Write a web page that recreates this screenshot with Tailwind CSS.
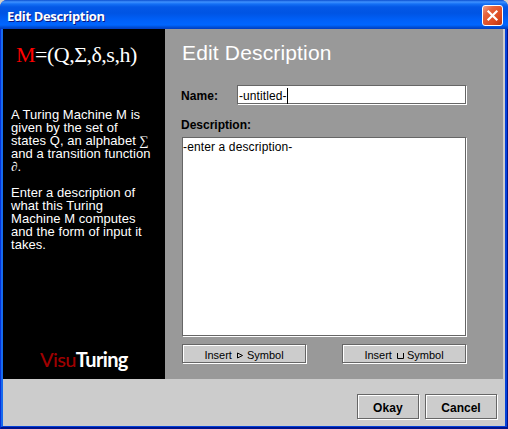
<!DOCTYPE html>
<html lang="en">
<head>
<meta charset="utf-8">
<title>Edit Description</title>
<script src="https://cdn.jsdelivr.net/npm/@tailwindcss/browser@4"></script>
</head>
<body class="bg-[#d4d0c8] font-['Liberation_Sans',Arial,sans-serif] text-black overflow-hidden">
<div class="w-[508px] h-[429px] flex flex-col rounded-t-[7px] overflow-hidden bg-[#0831d9] whitespace-nowrap">
  <header class="h-[29px] shrink-0 flex items-center justify-between pl-[7px] pr-[5px] pt-[3px] bg-[linear-gradient(180deg,#0b4fd0_0px,#3f92ff_2px,#1470f5_4px,#0458e6_7px,#0054e3_13px,#0060f8_20px,#0066ff_25px,#0050d8_27px,#003dc0_29px)]">
    <h1 class="font-['Open_Sans',sans-serif] font-bold text-[13px] leading-[16px] tracking-[-0.35px] text-white [text-shadow:1px_1px_0_#0a1883]">Edit Description</h1>
    <button class="w-[21px] h-[21px] rounded-[3px] border border-white bg-[linear-gradient(135deg,#f0a088_0%,#e5623c_30%,#dd4a20_70%,#b83410_100%)] flex items-center justify-center -mt-px" aria-label="Close">
      <svg class="w-[19px] h-[19px]" viewBox="0 0 19 19"><path d="M4.7 4.7 14.3 14.3M14.3 4.7 4.7 14.3" stroke="#fff" stroke-width="2.2" fill="none"/></svg>
    </button>
  </header>
  <div class="flex-1 flex border-x border-b-2 border-l-[#0831d9] border-r-[#00138c] border-b-[#00138c]">
  <div class="flex-1 flex flex-col border-l-2 border-r-2 border-b border-l-[#166aee] border-r-[#0441d8] border-b-[#0441d8] bg-[#ccc]">
    <div class="h-[350px] flex pr-[2px]">
      <aside class="w-[162px] bg-black text-white flex flex-col pl-2">
        <div class="h-[79px] pt-[14px] pl-[5px] font-['Liberation_Serif',serif] text-[22px] leading-[24px] tracking-[-0.5px]"><span class="text-[#f00]">M</span>=(Q,Σ,δ,s,h)</div>
        <p class="text-[13px] leading-[13px] tracking-[0.06px]">A Turing Machine M is<br>given by the set of<br>states Q, an alphabet <span class="font-['Liberation_Serif',serif]">∑</span><br>and a transition function<br><span class="font-['Liberation_Serif',serif]">∂</span>.</p>
        <p class="text-[13px] leading-[13px] tracking-[0.06px] mt-[13px]">Enter a description of<br>what this Turing<br>Machine M computes<br>and the form of input it<br>takes.</p>
        <div class="mt-auto mb-[8px] pl-[29px] font-['Lato',sans-serif] font-bold text-[20px] leading-[24px] tracking-[-0.65px]"><span class="text-[#a00000] font-medium">Visu</span>Turing</div>
      </aside>
      <main class="flex-1 bg-[#999] pl-[17px] flex flex-col">
        <h2 class="mt-[12px] text-[21px] leading-[24px] tracking-[0.16px] text-white">Edit Description</h2>
        <div class="mt-[20px] flex items-center h-[20px] text-[12px]">
          <label class="w-[55px] font-bold pt-[2px] -indent-px tracking-[0.05px]">Name:</label>
          <div class="w-[229px] h-[19px] -mt-px bg-white border border-[#666] shadow-[1px_1px_0_#fff] flex items-center pl-px pt-[2px]"><span class="tracking-[0.08px]">-untitled-</span><span class="w-px h-[16px] bg-black"></span></div>
        </div>
        <div class="mt-[12px] text-[12px] leading-[16px] font-bold -indent-px">Description:</div>
        <div class="mt-[4px] w-[284px] h-[199px] shrink-0 bg-white border border-[#666] shadow-[1px_1px_0_#fff] text-[12px] leading-[16px] tracking-[0.13px] pt-px">-enter a description-</div>
        <div class="mt-[8px] flex gap-[36px] text-[11px]">
          <button class="w-[124px] h-[19px] bg-[#ccc] border border-[#666] shadow-[1px_1px_0_#fff,inset_1px_1px_0_#fff] flex items-center justify-center pt-[3px]">Insert<svg class="ml-[5px] mr-[4px] w-[6px] h-[7px]" viewBox="0 0 6 7"><path d="M.5 1v5L5.5 3.5Z" fill="none" stroke="#000"/></svg>Symbol</button>
          <button class="w-[124px] h-[19px] bg-[#ccc] border border-[#666] shadow-[1px_1px_0_#fff,inset_1px_1px_0_#fff] flex items-center justify-center pt-[3px]">Insert<svg class="ml-[5px] mr-[3px] w-[7px] h-[9px]" viewBox="0 0 7 9"><path d="M.5 2v5.5h6V2" fill="none" stroke="#000"/></svg>Symbol</button>
        </div>
      </main>
    </div>
    <footer class="flex justify-end gap-[6px] pt-[15px] pr-[8px] text-[12px] font-bold">
      <button class="w-[62px] h-[25px] border border-[#666] shadow-[1px_1px_0_#fff,inset_1px_1px_0_#fff] pt-[2px] tracking-[0.1px]">Okay</button>
      <button class="w-[72px] h-[25px] border border-[#666] shadow-[1px_1px_0_#fff,inset_1px_1px_0_#fff] pt-[2px]">Cancel</button>
    </footer>
  </div>
  </div>
</div>
</body>
</html>
